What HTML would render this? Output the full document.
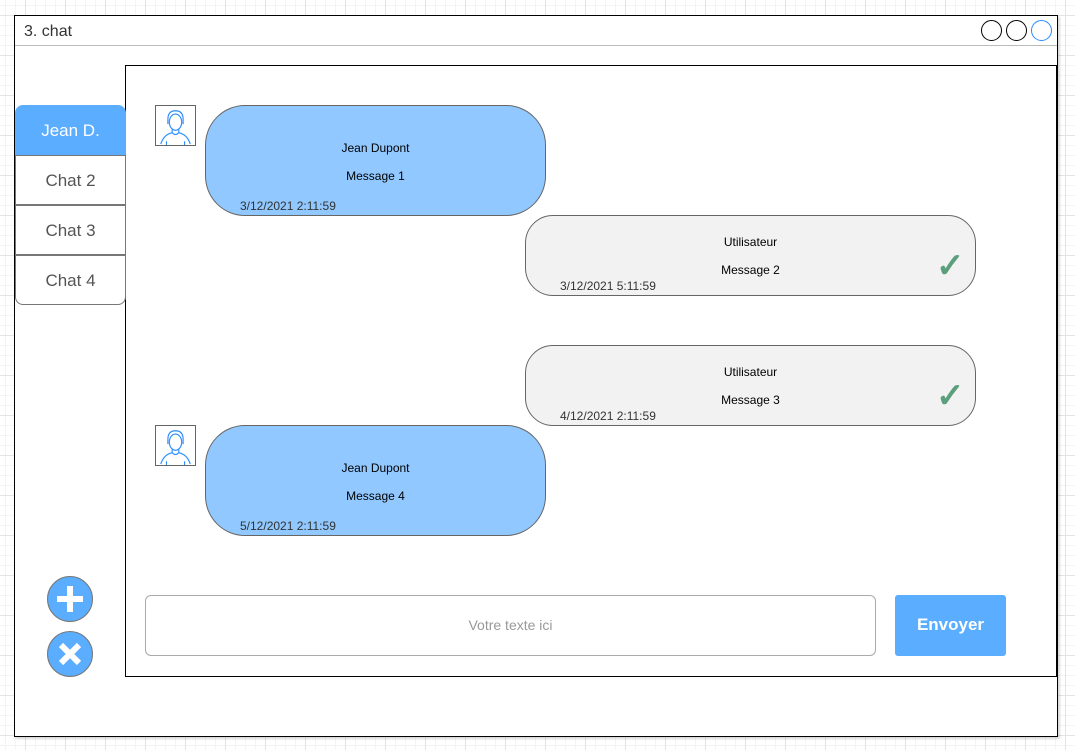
<!DOCTYPE html>
<html><head><meta charset="utf-8"><style>
*{box-sizing:border-box;margin:0;padding:0}
body{width:1075px;height:750px;position:relative;overflow:hidden;font-family:"Liberation Sans",sans-serif;
background-color:#fff;background-image:linear-gradient(#e4e4e4 1px,transparent 1px),linear-gradient(90deg,#e4e4e4 1px,transparent 1px),linear-gradient(#f4f4f4 1px,transparent 1px),linear-gradient(90deg,#f4f4f4 1px,transparent 1px);background-size:40px 40px,40px 40px,10px 10px,10px 10px;background-position:25px 15px,25px 15px,5px 5px,5px 5px;}
.a{position:absolute}
.win{left:14px;top:15px;width:1044px;height:722px;border:1px solid #000;background:#fff;box-shadow:2px 2px 2px rgba(0,0,0,.15)}
.title{left:15px;top:16px;width:1042px;height:30px;border-bottom:1px solid #bbb;font-size:16px;color:#333;padding:7px 9px}
.circ{width:21px;height:21px;border-radius:50%;border:1.5px solid #000;top:20px}
.panel{left:125px;top:65px;width:932px;height:612px;border:1px solid #000;background:#fff}
.tab{left:15px;width:111px;height:50px;border:1px solid #777;background:#fff;font-size:17px;color:#555;text-align:center;line-height:50px}
.bub{border:1px solid #666;font-size:12px;color:#000;text-align:center}
.bl{background:#90c8ff;border-radius:40px}
.gr{background:#f2f2f2;border-radius:28px}
.ts{font-size:12px;color:#333;position:absolute}
.av{width:41px;height:41px;border:1px solid #666;background:#fff}
.chk{color:#5b9f7d;font-size:34px;font-weight:bold}
.rb{width:46px;height:46px;border-radius:50%;background:#5aadff;border:1px solid #777;left:47px}
</style></head><body>
<div class="a win"></div>
<div class="a title">3. chat</div>
<div class="a circ" style="left:981px"></div>
<div class="a circ" style="left:1006px"></div>
<div class="a circ" style="left:1031px;border-color:#2a8cff"></div>
<div class="a panel"></div>
<div class="a tab" style="top:105px;background:#5aadff;color:#fff;border-color:#5aadff;border-radius:8px 8px 0 0">Jean D.</div>
<div class="a tab" style="top:155px">Chat 2</div>
<div class="a tab" style="top:205px">Chat 3</div>
<div class="a tab" style="top:255px;border-radius:0 0 8px 8px">Chat 4</div>

<svg class="a av" style="left:155px;top:105px" viewBox="0 0 41 41"><g fill="none" stroke="#2a8cff" stroke-width="1.2"><ellipse cx="20.5" cy="17" rx="6.5" ry="8.5"/><path d="M12.5 19 v-5 q0-9 8-9 q8 0 8 9 v5"/><path d="M17 25 v3 q-9 2-12 12 M24 25 v3 q9 2 12 12 M17 28 q3.5 4 7 0 M11 37 v4 M30 37 v4"/></g></svg>
<svg class="a av" style="left:155px;top:425px" viewBox="0 0 41 41"><g fill="none" stroke="#2a8cff" stroke-width="1.2"><ellipse cx="20.5" cy="17" rx="6.5" ry="8.5"/><path d="M12.5 19 v-5 q0-9 8-9 q8 0 8 9 v5"/><path d="M17 25 v3 q-9 2-12 12 M24 25 v3 q9 2 12 12 M17 28 q3.5 4 7 0 M11 37 v4 M30 37 v4"/></g></svg>

<div class="a bub bl" style="left:205px;top:105px;width:341px;height:111px"><div style="margin-top:35px">Jean Dupont</div><div style="margin-top:14px">Message 1</div><span class="ts" style="left:34px;top:93px">3/12/2021 2:11:59</span></div>
<div class="a bub gr" style="left:525px;top:215px;width:451px;height:81px"><div style="margin-top:19px">Utilisateur</div><div style="margin-top:14px">Message 2</div><span class="ts" style="left:34px;top:63px">3/12/2021 5:11:59</span><span class="a chk" style="left:410px;top:30px">✓</span></div>
<div class="a bub gr" style="left:525px;top:345px;width:451px;height:81px"><div style="margin-top:19px">Utilisateur</div><div style="margin-top:14px">Message 3</div><span class="ts" style="left:34px;top:63px">4/12/2021 2:11:59</span><span class="a chk" style="left:410px;top:30px">✓</span></div>
<div class="a bub bl" style="left:205px;top:425px;width:341px;height:111px"><div style="margin-top:35px">Jean Dupont</div><div style="margin-top:14px">Message 4</div><span class="ts" style="left:34px;top:93px">5/12/2021 2:11:59</span></div>

<div class="a" style="left:145px;top:595px;width:731px;height:61px;border:1px solid #aaa;border-radius:6px;background:#fff;color:#999;font-size:14px;text-align:center;line-height:59px">Votre texte ici</div>
<div class="a" style="left:895px;top:595px;width:111px;height:61px;background:#5aadff;border-radius:3px;color:#fff;font-weight:bold;font-size:17px;text-align:center;line-height:60px">Envoyer</div>

<div class="a rb" style="top:576px"><svg width="44" height="44" viewBox="0 0 44 44"><path d="M22 9v26M9 22h26" stroke="#fff" stroke-width="6"/></svg></div>
<div class="a rb" style="top:631px"><svg width="44" height="44" viewBox="0 0 44 44"><path d="M13 13l18 18M31 13l-18 18" stroke="#fff" stroke-width="6"/></svg></div>
</body></html>
